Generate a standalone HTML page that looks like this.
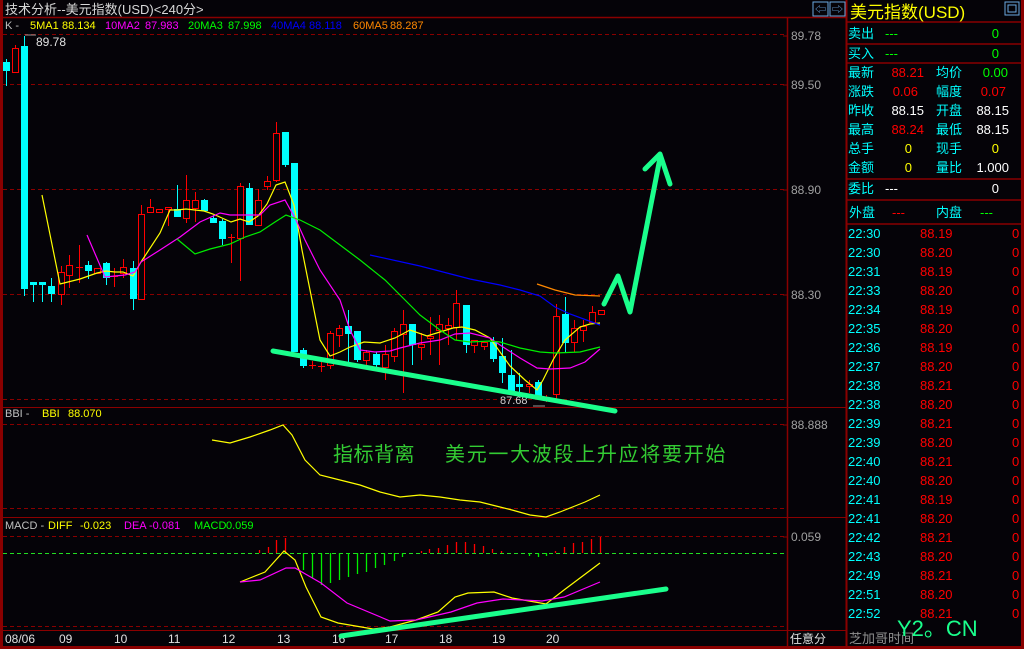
<!DOCTYPE html>
<html><head><meta charset="utf-8">
<style>
html,body{margin:0;padding:0;background:#000;}
body{width:1024px;height:649px;overflow:hidden;position:relative;font-family:"Liberation Sans","Noto Sans CJK SC",sans-serif;}
svg{position:absolute;left:0;top:0;}
text{font-family:"Liberation Sans","Noto Sans CJK SC",sans-serif;}
</style></head><body>
<svg id="s" width="1024" height="649" viewBox="0 0 1024 649" xmlns="http://www.w3.org/2000/svg">
<rect width="1024" height="649" fill="#050308"/>
<rect x="0" y="0" width="3" height="649" fill="#8a0000"/>
<rect x="0" y="646" width="1024" height="3" fill="#8a0000"/>
<rect x="1021" y="0" width="3" height="649" fill="#8a0000"/>
<line x1="0" y1="17.5" x2="847" y2="17.5" stroke="#8a0000" stroke-width="1.5"/>
<line x1="787.5" y1="18" x2="787.5" y2="646" stroke="#8a0000" stroke-width="1.5"/>
<line x1="846.5" y1="0" x2="846.5" y2="646" stroke="#8a0000" stroke-width="2"/>
<line x1="3" y1="407.5" x2="846" y2="407.5" stroke="#8a0000"/>
<line x1="3" y1="517.5" x2="846" y2="517.5" stroke="#8a0000"/>
<line x1="3" y1="630.5" x2="846" y2="630.5" stroke="#8a0000"/>
<line x1="3" y1="34.5" x2="787" y2="34.5" stroke="#8a0000" stroke-dasharray="4,3"/>
<line x1="3" y1="84.5" x2="787" y2="84.5" stroke="#8a0000" stroke-dasharray="4,3"/>
<line x1="3" y1="189.5" x2="787" y2="189.5" stroke="#8a0000" stroke-dasharray="4,3"/>
<line x1="3" y1="294.5" x2="787" y2="294.5" stroke="#8a0000" stroke-dasharray="4,3"/>
<line x1="3" y1="399.5" x2="787" y2="399.5" stroke="#8a0000" stroke-dasharray="4,3"/>
<line x1="3" y1="424.5" x2="787" y2="424.5" stroke="#8a0000" stroke-dasharray="4,3"/>
<line x1="3" y1="508.5" x2="787" y2="508.5" stroke="#8a0000" stroke-dasharray="4,3"/>
<line x1="3" y1="536.5" x2="787" y2="536.5" stroke="#8a0000" stroke-dasharray="4,3"/>
<line x1="3" y1="553.5" x2="787" y2="553.5" stroke="#22dd22" stroke-dasharray="4,3"/>
<line x1="3" y1="626.5" x2="787" y2="626.5" stroke="#8a0000" stroke-dasharray="4,3"/>
<g stroke="#8a0000" stroke-width="1.5">
<line x1="847" y1="22" x2="1021" y2="22"/><line x1="847" y1="44" x2="1021" y2="44"/>
<line x1="847" y1="63" x2="1021" y2="63"/><line x1="847" y1="179" x2="1021" y2="179"/>
<line x1="847" y1="200" x2="1021" y2="200"/><line x1="847" y1="224" x2="1021" y2="224"/>
</g>
<text x="5" y="14" font-size="13" fill="#d8d8d8">技术分析--美元指数(USD)&lt;240分&gt;</text>
<g font-size="11" font-family="Liberation Mono, monospace">
<text x="5" y="29" fill="#c0c0c0">K -</text>
<text x="30" y="29" fill="#ffff00">5MA1</text><text x="62" y="29" fill="#ffff00">88.134</text>
<text x="105" y="29" fill="#ff00ff">10MA2</text><text x="145" y="29" fill="#ff00ff">87.983</text>
<text x="188" y="29" fill="#00ff00">20MA3</text><text x="228" y="29" fill="#00ff00">87.998</text>
<text x="271" y="29" fill="#0000ff">40MA4</text><text x="309" y="29" fill="#0000ff">88.118</text>
<text x="353" y="29" fill="#ff8800">60MA5</text><text x="390" y="29" fill="#ff8800">88.287</text>
<text x="5" y="417" fill="#c0c0c0">BBI -</text>
<text x="42" y="417" fill="#ffff00">BBI</text><text x="68" y="417" fill="#ffff00">88.070</text>
<text x="5" y="529" fill="#c0c0c0">MACD -</text>
<text x="48" y="529" fill="#ffff00">DIFF</text><text x="80" y="529" fill="#ffff00">-0.023</text>
<text x="124" y="529" fill="#ff00ff">DEA</text><text x="149" y="529" fill="#ff00ff">-0.081</text>
<text x="194" y="529" fill="#00ff00">MACD</text><text x="226" y="529" fill="#00ff00">0.059</text>
</g>
<text x="36" y="46" font-size="12" fill="#e0e0e0">89.78</text>
<line x1="25" y1="35" x2="36" y2="35" stroke="#999"/>
<g font-size="12" fill="#a0a0a0">
<text x="791" y="40">89.78</text><text x="791" y="89">89.50</text><text x="791" y="194">88.90</text>
<text x="791" y="299">88.30</text><text x="791" y="429">88.888</text><text x="791" y="541">0.059</text>
</g>
<g stroke="#8a0000"><line x1="783" y1="36" x2="787" y2="36"/><line x1="783" y1="85" x2="787" y2="85"/><line x1="783" y1="190" x2="787" y2="190"/><line x1="783" y1="295" x2="787" y2="295"/><line x1="783" y1="425" x2="787" y2="425"/><line x1="783" y1="537" x2="787" y2="537"/></g>
<text x="790" y="643" font-size="12" fill="#e0e0e0">任意分</text>
<g font-size="12" fill="#e0e0e0">
<text x="5" y="643">08/06</text><text x="59" y="643">09</text><text x="114" y="643">10</text><text x="168" y="643">11</text>
<text x="222" y="643">12</text><text x="277" y="643">13</text><text x="332" y="643">16</text><text x="385" y="643">17</text>
<text x="439" y="643">18</text><text x="492" y="643">19</text><text x="546" y="643">20</text>
</g>
<g id="c"></g>
<polyline fill="none" stroke="#ffff00" stroke-width="1.2" points="42,195 60,284 80,279 97,273 106,271 115,272 123,272 133,276 141,262 160,233 170,210 177,210 186,209 195,210 204,211 213,214 222,218 231,222 240,219 249,222 258,216 267,204 276,185 285,182 294,205 302,250 312,300 320,340 330,356 340,352 350,347 364,342 380,343 395,338 410,330 427,336 440,332 453,328 462,327 475,330 490,338 500,352 510,366 525,380 537,390 543,380 553,360 565,340 580,327 590,324 600,323"/>
<polyline fill="none" stroke="#ff00ff" stroke-width="1.2" points="87,235 105,277 115,276 125,275 135,272 141,262 160,250 180,237 200,222 220,213 230,215 245,215 260,215 270,205 285,200 296,220 305,240 320,270 340,300 350,330 360,350 375,352 390,351 400,348 420,343 440,340 455,334 470,333 490,338 500,345 520,358 537,368 550,369 570,368 585,362 600,349"/>
<polyline fill="none" stroke="#00ee00" stroke-width="1.2" points="177,239 195,254 210,249 230,244 245,237 260,232 275,222 286,215 300,220 320,230 340,245 360,260 385,280 405,300 420,315 440,330 455,340 470,342 490,341 500,342 520,348 540,352 555,353 580,352 600,347"/>
<polyline fill="none" stroke="#0000ff" stroke-width="1.2" points="370,255 420,266 470,279 500,285 520,290 540,296 555,307 570,314 600,325"/>
<polyline fill="none" stroke="#ff8800" stroke-width="1.2" points="537,284 555,290 575,295 600,296"/>
<text x="500" y="404" font-size="11" fill="#d0d0d0">87.68</text>
<line x1="533" y1="406" x2="545" y2="406" stroke="#999"/>
<polyline fill="none" stroke="#ffff00" stroke-width="1.2" points="212,440 230,443 250,437 270,430 283,425 292,435 305,460 320,475 340,480 360,485 380,492 400,497 420,495 440,497 460,500 480,502 500,507 512,510 530,515 546,517 560,512 575,506 585,502 600,495"/>
<g id="h"></g>
<polyline fill="none" stroke="#ffff00" stroke-width="1.2" points="240,582 265,572 284,551 295,560 306,587 321,617 338,623 373,629 390,627 416,620 438,612 455,597 468,593 494,592 512,598 546,604 564,590 600,563"/>
<polyline fill="none" stroke="#ff00ff" stroke-width="1.2" points="240,582 260,580 286,568 295,568 321,583 347,603 390,621 416,620 451,612 477,603 503,599 542,601 564,597 600,582"/>
<g stroke="#1aff8c" stroke-width="5" fill="none" stroke-linecap="round" stroke-linejoin="round">
<line x1="273" y1="351" x2="615" y2="411"/>
<line x1="341" y1="636" x2="666" y2="589"/>
<polyline points="604,304 618,276 630,312 660,158"/>
<polyline points="645,169 660,154 670,184"/>
</g>
<text x="333" y="461" font-size="20" letter-spacing="0.5" fill="#33cc33" font-family="Noto Sans CJK SC, sans-serif">指标背离</text>
<text x="445" y="461" font-size="20" letter-spacing="1.7" fill="#33cc33" font-family="Noto Sans CJK SC, sans-serif">美元一大波段上升应将要开始</text>
<rect x="813" y="2" width="15" height="14" fill="none" stroke="#6aa8e0"/><text x="815" y="13" font-size="11" fill="#6aa8e0">⇦</text>
<rect x="830" y="2" width="15" height="14" fill="none" stroke="#6aa8e0"/><text x="832" y="13" font-size="11" fill="#6aa8e0">⇨</text>
<rect x="1005" y="2" width="14" height="13" fill="none" stroke="#6aa8e0"/><rect x="1008" y="5" width="8" height="7" fill="none" stroke="#6aa8e0"/>
<text x="850" y="18" font-size="17" fill="#ffff00">美元指数(USD)</text>
<g font-size="13" fill="#00ffff">
<text x="848" y="38">卖出</text><text x="848" y="58">买入</text>
<text x="848" y="77">最新</text><text x="848" y="96">涨跌</text><text x="848" y="115">昨收</text><text x="848" y="134">最高</text><text x="848" y="153">总手</text><text x="848" y="172">金额</text>
<text x="936" y="77">均价</text><text x="936" y="96">幅度</text><text x="936" y="115">开盘</text><text x="936" y="134">最低</text><text x="936" y="153">现手</text><text x="936" y="172">量比</text>
<text x="848" y="193">委比</text><text x="849" y="217">外盘</text><text x="936" y="217">内盘</text>
</g>
<g font-size="13" text-anchor="end">
<text x="898" y="38" fill="#00ff00">---</text><text x="999" y="38" fill="#00ff00">0</text>
<text x="898" y="58" fill="#00ff00">---</text><text x="999" y="58" fill="#00ff00">0</text>
<text x="924" y="77" fill="#ff0000">88.21</text><text x="1008" y="77" fill="#00ff00">0.00</text>
<text x="918" y="96" fill="#ff0000">0.06</text><text x="1006" y="96" fill="#ff0000">0.07</text>
<text x="924" y="115" fill="#fff">88.15</text><text x="1009" y="115" fill="#fff">88.15</text>
<text x="924" y="134" fill="#ff0000">88.24</text><text x="1009" y="134" fill="#fff">88.15</text>
<text x="912" y="153" fill="#ffff00">0</text><text x="999" y="153" fill="#ffff00">0</text>
<text x="912" y="172" fill="#ffff00">0</text><text x="1009" y="172" fill="#fff">1.000</text>
<text x="898" y="193" fill="#fff">---</text><text x="999" y="193" fill="#fff">0</text>
<text x="905" y="217" fill="#ff0000">---</text><text x="993" y="217" fill="#00ff00">---</text>
</g>
<g font-size="13" font-family="Liberation Mono, monospace">
<g fill="#00ffff">
<text x="848" y="238">22:30</text><text x="848" y="257">22:30</text><text x="848" y="276">22:31</text><text x="848" y="295">22:33</text><text x="848" y="314">22:34</text><text x="848" y="333">22:35</text><text x="848" y="352">22:36</text><text x="848" y="371">22:37</text><text x="848" y="390">22:38</text><text x="848" y="409">22:38</text><text x="848" y="428">22:39</text><text x="848" y="447">22:39</text><text x="848" y="466">22:40</text><text x="848" y="485">22:40</text><text x="848" y="504">22:41</text><text x="848" y="523">22:41</text><text x="848" y="542">22:42</text><text x="848" y="561">22:43</text><text x="848" y="580">22:49</text><text x="848" y="599">22:51</text><text x="848" y="618">22:52</text>
</g>
<g fill="#ff0000">
<text x="920" y="238">88.19</text><text x="920" y="257">88.20</text><text x="920" y="276">88.19</text><text x="920" y="295">88.20</text><text x="920" y="314">88.19</text><text x="920" y="333">88.20</text><text x="920" y="352">88.19</text><text x="920" y="371">88.20</text><text x="920" y="390">88.21</text><text x="920" y="409">88.20</text><text x="920" y="428">88.21</text><text x="920" y="447">88.20</text><text x="920" y="466">88.21</text><text x="920" y="485">88.20</text><text x="920" y="504">88.19</text><text x="920" y="523">88.20</text><text x="920" y="542">88.21</text><text x="920" y="561">88.20</text><text x="920" y="580">88.21</text><text x="920" y="599">88.20</text><text x="920" y="618">88.21</text>
<text x="1012" y="238">0</text><text x="1012" y="257">0</text><text x="1012" y="276">0</text><text x="1012" y="295">0</text><text x="1012" y="314">0</text><text x="1012" y="333">0</text><text x="1012" y="352">0</text><text x="1012" y="371">0</text><text x="1012" y="390">0</text><text x="1012" y="409">0</text><text x="1012" y="428">0</text><text x="1012" y="447">0</text><text x="1012" y="466">0</text><text x="1012" y="485">0</text><text x="1012" y="504">0</text><text x="1012" y="523">0</text><text x="1012" y="542">0</text><text x="1012" y="561">0</text><text x="1012" y="580">0</text><text x="1012" y="599">0</text><text x="1012" y="618">0</text>
</g>
</g>
<text x="849" y="643" font-size="13" fill="#909090">芝加哥时间</text>
<text x="897" y="636" font-size="22" fill="#1aff8c">Y2。CN</text>
</svg>
<script>
var C=[[6,'c',62,71,59,86],[15,'r',48,72,45,72],[24,'c',46,289,36,296],[33,'c',282,285,282,302],[42,'c',282,285,282,302],[51,'c',286,294,278,302],[61,'r',272,294,266,305],[69,'r',265,275,255,288],[79,'r',267,267,245,283],[88,'c',265,271,261,279],[97,'r',268,273,268,273],[106,'c',263,278,262,285],[114,'r',276,276,268,287],[123,'r',267,273,259,278],[133,'c',268,299,261,310],[141,'r',214,299,205,300],[150,'r',207,212,199,212],[159,'r',209,212,209,212],[168,'r',207,209,207,226],[177,'c',209,217,185,217],[186,'r',200,218,175,223],[195,'r',200,208,192,222],[204,'c',200,211,199,211],[213,'c',218,223,215,223],[222,'c',221,239,219,245],[231,'r',237,237,234,263],[240,'r',186,238,183,281],[249,'c',188,225,183,225],[258,'r',200,225,189,225],[267,'r',181,186,176,190],[276,'r',133,180,122,182],[285,'c',132,165,132,167],[294,'c',163,352,163,352],[303,'c',350,366,348,368],[312,'r',365,365,361,369],[321,'r',366,366,362,372],[330,'r',333,365,331,369],[339,'r',328,335,325,347],[348,'c',326,334,310,362],[357,'c',331,360,331,362],[366,'r',352,360,350,366],[376,'c',354,365,352,367],[385,'r',354,367,345,380],[394,'r',331,356,328,362],[403,'r',324,334,310,393],[412,'c',324,345,324,365],[421,'r',344,347,333,360],[430,'r',336,338,317,355],[439,'r',324,330,315,365],[448,'r',325,328,318,345],[456,'r',303,327,290,340],[466,'c',305,345,305,353],[474,'r',340,345,340,353],[484,'r',342,346,342,350],[493,'c',342,359,337,362],[502,'c',356,373,338,383],[511,'c',375,392,350,395],[519,'c',384,387,373,392],[529,'r',384,386,380,393],[538,'c',382,398,380,398],[546,'r',397,400,395,402],[556,'r',316,394,304,399],[565,'c',314,343,297,353],[574,'r',328,342,320,352],[583,'r',326,330,320,342],[592,'r',312,322,306,323],[601,'r',310,314,310,314]];
var g=document.getElementById('c'),s='';
C.forEach(function(d){var x=d[0],col=d[1]=='r'?'#ff0000':'#00ffff';
s+='<line x1="'+(x+.5)+'" y1="'+d[4]+'" x2="'+(x+.5)+'" y2="'+d[5]+'" stroke="'+col+'"/>';
var h=d[3]-d[2];
if(d[1]=='r'){if(h<1)s+='<line x1="'+(x-3)+'" y1="'+(d[2]+.5)+'" x2="'+(x+4)+'" y2="'+(d[2]+.5)+'" stroke="#ff0000"/>';else s+='<rect x="'+(x-3+.5)+'" y="'+(d[2]+.5)+'" width="6" height="'+h+'" fill="#050308" stroke="#ff0000"/>';}
else s+='<rect x="'+(x-3)+'" y="'+d[2]+'" width="7" height="'+Math.max(h,2)+'" fill="#00ffff"/>';});
g.innerHTML=s;
var H=[[259,550,'r'],[268,547,'r'],[276,540,'r'],[285,538,'r'],[303,570,'g'],[312,578,'g'],[321,585,'g'],[330,583,'g'],[339,580,'g'],[348,577,'g'],[357,574,'g'],[366,572,'g'],[375,568,'g'],[384,565,'g'],[394,561,'g'],[402,557,'g'],[421,551,'r'],[429,549,'r'],[438,548,'r'],[447,545,'r'],[456,542,'r'],[465,542,'r'],[474,544,'r'],[483,546,'r'],[492,549,'r'],[501,551,'r'],[529,556,'g'],[538,557,'g'],[546,556,'g'],[555,551,'r'],[564,547,'r'],[573,543,'r'],[582,542,'r'],[591,539,'r'],[600,537,'r']];
s='';H.forEach(function(d){s+='<line x1="'+(d[0]+.5)+'" y1="553" x2="'+(d[0]+.5)+'" y2="'+d[1]+'" stroke="'+(d[2]=='r'?'#ff0000':'#00ee00')+'" stroke-width="1.3"/>';});
document.getElementById('h').innerHTML=s;
</script>
</body></html>
